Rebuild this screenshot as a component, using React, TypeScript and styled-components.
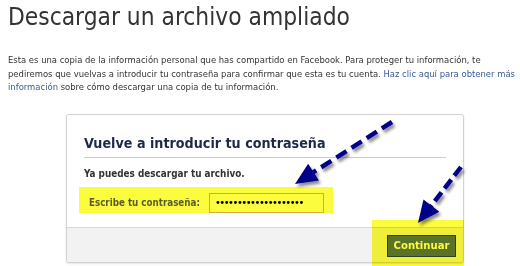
import React from "react";
import styled, { createGlobalStyle } from "styled-components";

const GlobalStyle = createGlobalStyle`
  html, body { margin: 0; padding: 0; background: #ffffff; }
  body { font-family: "DejaVu Sans Condensed", "DejaVu Sans", sans-serif; color: #333333; }
  * { box-sizing: border-box; }
`;

const Page = styled.div`
  position: relative;
  width: 520px;
  height: 266px;
  padding: 0 8px;
  background: #ffffff;
  overflow: hidden;
`;

const Heading = styled.h1`
  margin: 3px 0 0;
  font-size: 24.3px;
  line-height: 28px;
  font-weight: normal;
  color: #333333;
  white-space: nowrap;
`;

const Intro = styled.p`
  margin: 22px 0 0;
  font-size: 9.4px;
  line-height: 13.5px;
  color: #333333;
  white-space: nowrap;
`;

const Link = styled.a`
  color: #3b5998;
  text-decoration: none;
`;

const Card = styled.section`
  position: relative;
  margin: 20px 0 0 58px;
  width: 398px;
  border: 1px solid #d2d2d2;
  border-radius: 3px;
  box-shadow: 0 1px 2px rgba(0, 0, 0, 0.12);
  background: #ffffff;
`;

const CardBody = styled.div`
  padding: 19px 17px 14px 17px;
`;

const CardTitle = styled.h2`
  margin: 0;
  padding-bottom: 5px;
  border-bottom: 1px solid #cccccc;
  font-size: 14.2px;
  line-height: 18px;
  font-weight: bold;
  color: #1c2a47;
  white-space: nowrap;
`;

const Notice = styled.p`
  margin: 9px 0 0;
  font-size: 9.86px;
  line-height: 13px;
  font-weight: bold;
  color: #333333;
  white-space: nowrap;
`;

const PasswordRow = styled.div`
  display: flex;
  align-items: center;
  gap: 9px;
  margin: 7px 0 0 -5px;
  width: 254px;
  height: 26px;
  padding: 6px 9px 0 10px;
  background: #fcfc3e;
`;

const Label = styled.label`
  font-size: 9.73px;
  font-weight: bold;
  color: #5c5c26;
  white-space: nowrap;
`;

const PasswordInput = styled.input`
  width: 115px;
  height: 20px;
  margin: 0;
  padding: 0 0 0 5px;
  border: 1px solid #d2ad3a;
  background: #fcfc3e;
  font-family: "DejaVu Sans", sans-serif;
  font-size: 10px;
  letter-spacing: -1.5px;
  color: #000000;
  outline: none;
`;

const Footer = styled.div`
  display: flex;
  justify-content: flex-end;
  padding: 7px 7px 5px;
  border-top: 1px solid #d8d8d8;
  background: #f2f2f2;
  border-radius: 0 0 3px 3px;
`;

const Button = styled.button`
  width: 69px;
  height: 22px;
  padding: 0;
  border: 1px solid #29447e;
  background: #5b74a8;
  color: #ffffff;
  font-family: "DejaVu Sans Condensed", "DejaVu Sans", sans-serif;
  font-size: 11.2px;
  font-weight: bold;
  cursor: pointer;
`;

const Highlight = styled.div`
  position: absolute;
  left: 305px;
  top: 105px;
  width: 92px;
  height: 46px;
  background: #fcfc3e;
  mix-blend-mode: multiply;
  pointer-events: none;
`;

const ArrowLayer = styled.svg`
  position: absolute;
  left: 0;
  top: 0;
  width: 520px;
  height: 266px;
  pointer-events: none;
`;

type ArrowProps = { x1: number; y1: number; tx: number; ty: number; dash: string };

function Arrow({ x1, y1, tx, ty, dash }: ArrowProps) {
  const dx = tx - x1;
  const dy = ty - y1;
  const len = Math.hypot(dx, dy);
  const ux = dx / len;
  const uy = dy / len;
  const head = 22;
  const half = 10;
  const bx = tx - ux * head;
  const by = ty - uy * head;
  const px = -uy;
  const py = ux;
  const pts = `${tx},${ty} ${bx + px * half},${by + py * half} ${bx - px * half},${by - py * half}`;
  return (
    <g filter="url(#arrowShadow)">
      <line x1={x1} y1={y1} x2={bx + ux * 2} y2={by + uy * 2} stroke="#000088" strokeWidth={4.5} strokeDasharray={dash} />
      <polygon points={pts} fill="#000088" />
    </g>
  );
}

export default function App() {
  return (
    <>
      <GlobalStyle />
      <Page>
        <Heading>Descargar un archivo ampliado</Heading>
        <Intro>
          Esta es una copia de la información personal que has compartido en Facebook. Para proteger tu información, te
          <br />
          pediremos que vuelvas a introducir tu contraseña para confirmar que esta es tu cuenta.{" "}
          <Link href="#">
            Haz clic aquí para obtener más
            <br />
            información
          </Link>{" "}
          sobre cómo descargar una copia de tu información.
        </Intro>
        <Card>
          <CardBody>
            <CardTitle>Vuelve a introducir tu contraseña</CardTitle>
            <Notice>Ya puedes descargar tu archivo.</Notice>
            <PasswordRow>
              <Label htmlFor="pw">Escribe tu contraseña:</Label>
              <PasswordInput id="pw" type="password" defaultValue="aaaaaaaaaaaaaaaaaaaa" readOnly />
            </PasswordRow>
          </CardBody>
          <Footer>
            <Button type="button">Continuar</Button>
          </Footer>
          <Highlight />
        </Card>
        <ArrowLayer viewBox="0 0 520 266">
          <defs>
            <filter id="arrowShadow" x="-20%" y="-20%" width="140%" height="140%">
              <feDropShadow dx="2" dy="3" stdDeviation="1.5" floodColor="#000000" floodOpacity="0.45" />
            </filter>
          </defs>
          <Arrow x1={392} y1={122} tx={295} ty={184} dash="12 6" />
          <Arrow x1={461} y1={167} tx={418} ty={223} dash="11 5" />
        </ArrowLayer>
      </Page>
    </>
  );
}
